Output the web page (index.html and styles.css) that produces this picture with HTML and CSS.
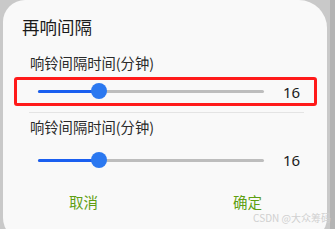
FILE: index.html
```html
<!DOCTYPE html>
<html lang="zh">
<head>
<meta charset="utf-8">
<link rel="stylesheet" href="styles.css">
</head>
<body>
<div class="card">
  <div class="title">再响间隔</div>
  <div class="label">响铃间隔时间(分钟)</div>
  <div class="row highlighted">
    <div class="slider">
      <div class="fill"></div>
      <div class="thumb"></div>
    </div>
    <div class="value">16</div>
  </div>
  <div class="divider"></div>
  <div class="label label2">响铃间隔时间(分钟)</div>
  <div class="row second">
    <div class="slider">
      <div class="fill"></div>
      <div class="thumb"></div>
    </div>
    <div class="value">16</div>
  </div>
  <div class="buttons">
    <div class="btn">取消</div>
    <div class="btn">确定</div>
  </div>
  <div class="watermark">CSDN @大众筹码</div>
</div>
</body>
</html>
```
FILE: styles.css
```css
html, body {
  margin: 0;
  padding: 0;
}
body {
  width: 335px;
  height: 229px;
  overflow: hidden;
  background: linear-gradient(to right, #c9c9c9 0, #c9c9c9 330px, #b4b4b4 330px);
  font-family: "Noto Sans CJK SC", "Noto Sans", sans-serif;
}
.card {
  position: relative;
  margin-left: 3px;
  width: 324px;
  height: 240px;
  background: #f9f9f9;
  border-radius: 22px 28px 22px 22px;
  box-sizing: border-box;
  padding-top: 14px;
}
.title {
  margin-left: 19px;
  font-size: 17.5px;
  line-height: 25px;
  color: #1b1b1b;
}
.label {
  margin-left: 27px;
  margin-top: 14px;
  font-size: 14.3px;
  line-height: 20px;
  color: #2a2a2a;
}
.row {
  display: flex;
  align-items: center;
  height: 28px;
  margin: 0 10px 0 11px;
  padding: 0 0 0 24px;
  box-sizing: border-box;
}
.highlighted {
  margin-top: 4px;
  height: 29px;
  border: 3px solid #ff1a1a;
  border-radius: 3px;
  padding-left: 21px;
}
.slider {
  position: relative;
  width: 226px;
  height: 3px;
  border-radius: 2px;
  background: #bdbdbd;
}
.fill {
  width: 61px;
  height: 3px;
  border-radius: 2px;
  background: #1a5ff0;
}
.thumb {
  position: absolute;
  left: 53px;
  top: -7px;
  width: 16px;
  height: 16px;
  border-radius: 50%;
  background: #2b78f0;
}
.value {
  margin-left: 19px;
  font-size: 15px;
  color: #1b1b1b;
  font-family: "Noto Sans", sans-serif;
}
.divider {
  height: 1px;
  margin: 6px 23px 0 26px;
  background: #e4e4e4;
}
.label2 {
  margin-top: 4px;
}
.second {
  margin-top: 9px;
}
.buttons {
  display: flex;
  margin-top: 18px;
  padding-left: 66px;
  gap: 135px;
}
.btn {
  font-size: 14.5px;
  line-height: 20px;
  color: #5f9f12;
}
.watermark {
  position: absolute;
  right: -4px;
  top: 210px;
  font-size: 10px;
  color: #d0d0d0;
  font-family: "Noto Sans CJK SC", sans-serif;
}
```
